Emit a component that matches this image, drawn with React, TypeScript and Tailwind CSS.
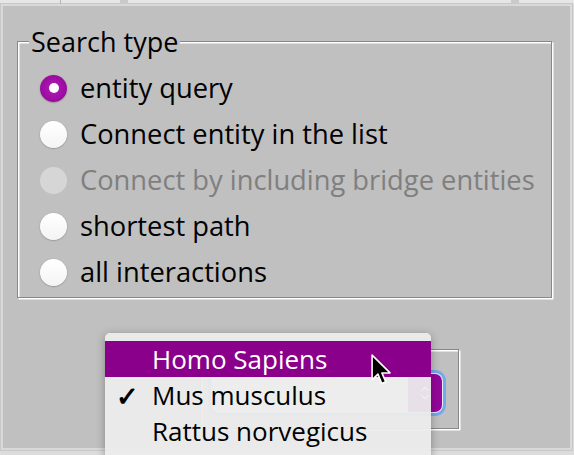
import { ChevronDown, ChevronUp } from 'lucide-react';

const options = [
  { label: 'entity query', selected: true },
  { label: 'Connect entity in the list' },
  { label: 'Connect by including bridge entities', disabled: true },
  { label: 'shortest path' },
  { label: 'all interactions' },
];

const species = ['Homo Sapiens', 'Mus musculus', 'Rattus norvegicus'];

const Radio = ({ selected, disabled }: { selected?: boolean; disabled?: boolean }) => {
  if (selected) {
    return (
      <div className="w-[27px] h-[27px] rounded-full bg-[radial-gradient(circle,#b41cba,#8c0491)] shadow-[0_0.5px_1.5px_rgba(0,0,0,0.35)] flex items-center justify-center shrink-0">
        <div className="w-[10px] h-[10px] rounded-full bg-white" />
      </div>
    );
  }
  return (
    <div
      className={`w-[27px] h-[27px] rounded-full shrink-0 ${
        disabled
          ? 'bg-[#d6d6d6]'
          : 'bg-[linear-gradient(#ffffff,#f4f4f4)] shadow-[0_0.5px_1.5px_rgba(0,0,0,0.35)]'
      }`}
    />
  );
};

const Cursor = () => (
  <svg width="22" height="33" viewBox="0 0 20 30" className="absolute left-[371px] top-[354px]">
    <path
      d="M1 1 L1 23.5 L6.3 18.3 L9.8 26.8 L13.4 25.3 L9.9 17.2 L17.3 17.2 Z"
      fill="#000"
      stroke="#fff"
      strokeWidth="1.4"
      strokeLinejoin="round"
    />
  </svg>
);

export default function App() {
  return (
    <div className="w-[574px] h-[455px] relative overflow-hidden bg-[#dcdcdc] font-['Open_Sans',sans-serif]">
      {/* window strip above */}
      <div className="h-[4px] flex bg-[#e6e6e6]">
        <div className="w-[60px]" />
        <div className="w-px bg-[#b4b4b4]" />
        <div className="w-[59px]" />
        <div className="w-[8px] bg-[#cacaca]" />
        <div className="flex-1" />
        <div className="w-[8px] bg-[#cacaca]" />
        <div className="w-[55px]" />
      </div>

      {/* panel */}
      <div className="ml-[1px] w-[571px] h-[446px] border-2 border-[#d9d9d9] shadow-[0_0_0_1px_#c8c8c8] bg-[#c0c0c0] pt-[35px] pl-[14px]">
        {/* Search type group */}
        <div className="relative w-[535px] h-[257px] border-[1.5px] border-[#888] shadow-[1.5px_1.5px_0_#fff,inset_1.5px_1.5px_0_#fff] pt-[23px]">
          <div className="absolute left-[11px] -top-[17px] px-[2px] bg-[#c0c0c0] text-[27px] leading-[34px] text-black">
            Search type
          </div>
          {options.map((o) => (
            <div key={o.label} className="h-[46px] flex items-center pl-[22px] gap-[13px]">
              <Radio selected={o.selected} disabled={o.disabled} />
              <span className={`text-[27.3px] leading-none ${o.disabled ? 'text-[#7f7f7f]' : 'text-black'}`}>
                {o.label}
              </span>
            </div>
          ))}
        </div>

        {/* species combo container */}
        <div className="mt-[51px] ml-[183px] w-[259px] h-[80px] border-[1.5px] border-[#888] shadow-[1.5px_1.5px_0_#fff,inset_1.5px_1.5px_0_#fff] flex justify-end pt-[24px] pr-[16px]">
          <div className="w-[230px] h-[38px] rounded-[7px] bg-white flex justify-end shadow-[0_0_0_1px_#e3edfb,0_0_0_4px_#74a9ec]">
            <div className="w-[34px] h-full rounded-r-[7px] bg-[#95069a] flex flex-col items-center justify-center text-white">
              <ChevronUp className="w-[14px] h-[14px] -mb-[3px]" strokeWidth={2.5} />
              <ChevronDown className="w-[14px] h-[14px] -mt-[3px]" strokeWidth={2.5} />
            </div>
          </div>
        </div>
      </div>

      {/* popup menu */}
      <div className="absolute left-[105px] top-[333px] w-[326px] h-[130px] rounded-t-[5px] bg-[#ececec]/95 shadow-[0_2px_10px_rgba(0,0,0,0.3)] pt-[8px]">
        {species.map((s, i) => (
          <div
            key={s}
            className={`h-[36px] flex items-center ${i === 0 ? 'bg-[#8b008b] text-white' : 'text-black'}`}
          >
            <span className="w-[47px] pl-[11px] text-[27px] font-bold leading-none">{i === 1 ? '✓' : ''}</span>
            <span className="text-[26px] leading-none">{s}</span>
          </div>
        ))}
      </div>

      <Cursor />
    </div>
  );
}
